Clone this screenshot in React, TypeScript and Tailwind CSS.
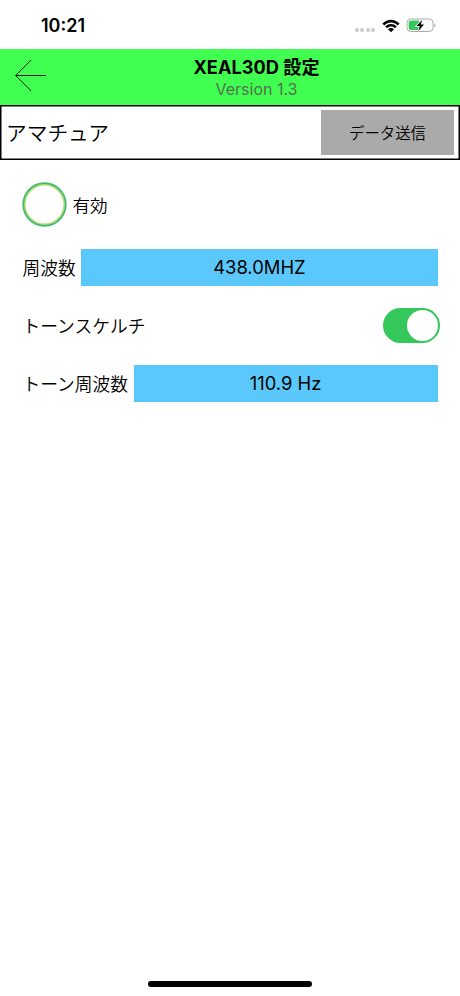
import React from 'react';

function StatusBar() {
  return (
    <div className="flex h-[49px] shrink-0 items-start justify-between pl-[41px] pr-[24px]">
      <span className="mt-[15px] text-[18px] font-semibold leading-[22px]">10:21</span>
      <div className="mt-[18px] flex h-[15px] items-center">
        <div className="mt-[9px] flex gap-[1.5px]">
          {[0, 1, 2, 3].map((i) => (
            <span key={i} className="size-[4px] rounded-full bg-[#cbcbcb]" />
          ))}
        </div>
        <svg className="ml-[7px]" width="18" height="14" viewBox="0 0 18 14">
          <path d="M.4 4.6C5.3-.5 12.7-.5 17.6 4.6L15.8 6.4C11.9 2.5 6.1 2.5 2.2 6.4Z" />
          <path d="M3.2 7.4C6.5 4.1 11.5 4.1 14.8 7.4L13 9.2C10.7 7 7.3 7 5 9.2Z" />
          <path d="M6 10.2C7.7 8.6 10.3 8.6 12 10.2L9 13.2Z" />
        </svg>
        <svg className="ml-[6px]" width="30" height="15" viewBox="0 0 30 15">
          <rect x="1" y="1" width="26" height="12.5" rx="3.8" fill="none" stroke="#aaa" strokeWidth="1" />
          <path d="M28.2 5.2v4.2c1.7-.7 1.7-3.5 0-4.2Z" fill="#aaa" />
          <path d="M4.7 2.5H13v9.5H4.7A2 2 0 0 1 2.7 10V4.5A2 2 0 0 1 4.7 2.5Z" fill="#34c759" />
          <path d="M16.3 1.8L10.4 8h3.3l-1.2 4.9L18 6.4h-3.3Z" stroke="#fff" strokeWidth="1.6" paintOrder="stroke" />
        </svg>
      </div>
    </div>
  );
}

function Header() {
  return (
    <header className="flex h-[56px] shrink-0 bg-[#40ff50]">
      <button className="w-[53px] pb-[2px] pl-[15px]" aria-label="戻る">
        <svg width="32" height="34" viewBox="0 0 32 34" fill="none" stroke="#000" strokeWidth="0.9">
          <path d="M31 16.5H.7M16.2 1L.7 16.5L16.2 32" />
        </svg>
      </button>
      <div className="flex flex-1 flex-col items-center pt-[7px]">
        <h1 className="text-[18.2px] font-bold leading-[23px]">XEAL30D 設定</h1>
        <p className="text-[16px] leading-[20px] text-[#53714f]">Version 1.3</p>
      </div>
    </header>
  );
}

function ValueField({ label, value }: { label: string; value: string }) {
  return (
    <div className="flex h-[37px] items-center gap-[5.5px] pr-[22.5px]">
      <span className="pt-[3px] text-[17.75px] font-[350]">{label}</span>
      <button className="h-full flex-1 bg-[#5ac8fa] pt-px text-[18.4px]">{value}</button>
    </div>
  );
}

export default function App() {
  return (
    <div className="flex h-[996px] w-[460px] flex-col bg-white font-['Inter','Noto_Sans_CJK_JP',sans-serif] text-black">
      <StatusBar />
      <Header />
      <section className="flex h-[55px] shrink-0 items-center justify-between border border-black px-[5px] shadow-[inset_0_0_0_0.5px_#000]">
        <span className="pt-[3px] text-[20.7px] font-[350]">アマチュア</span>
        <button className="h-[45px] w-[133px] bg-[#aaaaaa] pt-[2px] text-[15.4px] font-[350]">データ送信</button>
      </section>
      <main className="flex flex-1 flex-col pl-[22.5px]">
        <div className="mt-[22px] flex h-[45px] items-center gap-[5.5px]">
          <svg className="-ml-[0.5px]" width="45" height="45" viewBox="0 0 45 45" fill="none">
            <circle cx="22.5" cy="22.5" r="20" stroke="#a8dc62" strokeWidth="2" />
            <circle cx="22.5" cy="22.5" r="21.3" stroke="#43b978" strokeWidth="1.7" />
          </svg>
          <span className="pt-[3px] text-[17.6px] font-[350]">有効</span>
        </div>
        <div className="mt-[22px]">
          <ValueField label="周波数" value="438.0MHZ" />
        </div>
        <div className="mt-[22px] flex h-[35px] items-center justify-between pr-[20px]">
          <span className="pt-[3px] text-[17.75px] font-[350]">トーンスケルチ</span>
          <button role="switch" aria-checked="true" className="flex h-[35px] w-[57px] items-center justify-end rounded-full bg-[#34c759] pr-[2px]">
            <span className="size-[31px] rounded-full bg-white" />
          </button>
        </div>
        <div className="mt-[22px]">
          <ValueField label="トーン周波数" value="110.9 Hz" />
        </div>
      </main>
      <div className="mb-[9px] h-[6px] w-[164px] self-center rounded-full bg-black" />
    </div>
  );
}
